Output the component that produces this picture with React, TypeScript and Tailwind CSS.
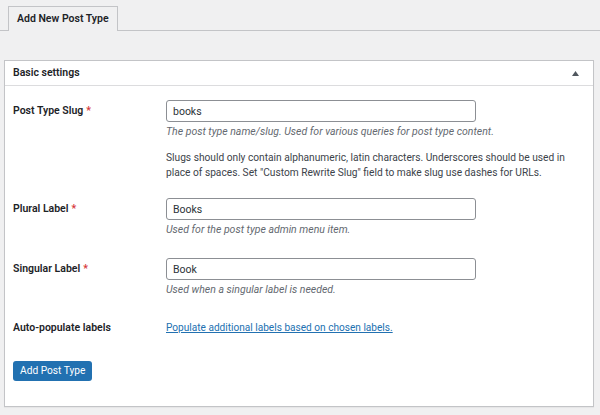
const font = "font-['Roboto','Noto_Sans',sans-serif]";

function Req() {
  return <span className="ml-[3px] text-[#d63638]">*</span>;
}

function Field({
  label,
  value,
  help,
  className = "",
  children,
}: {
  label: string;
  value: string;
  help: string;
  className?: string;
  children?: React.ReactNode;
}) {
  return (
    <div className={`flex ${className}`}>
      <div className="w-[153px] shrink-0 text-[10.5px] font-semibold leading-[22px] text-[#1d2327]">
        {label}
        <Req />
      </div>
      <div className="flex-1">
        <input
          readOnly
          value={value}
          className="box-border block h-[22px] w-[310px] rounded-[3px] border border-[#8c8f94] bg-white px-[6px] text-[10.5px] text-[#2c3338] outline-none"
        />
        <p className="mt-[2px] text-[10.5px] italic leading-[15px] text-[#646970]">{help}</p>
        {children}
      </div>
    </div>
  );
}

export default function App() {
  return (
    <div className={`min-h-[415px] w-[600px] bg-[#f0f0f1] ${font}`}>
      {/* tab strip */}
      <div className="flex border-b border-[#c3c4c7] pl-[8px] pt-[6px]">
        <div className="-mb-px border border-b-0 border-[#c3c4c7] bg-[#f0f0f1] px-[8px] text-[10.5px] font-semibold leading-[24px] text-[#1d2327]">
          Add New Post Type
        </div>
      </div>

      {/* settings panel */}
      <div className="ml-[4px] mr-[6px] mt-[29px] border border-[#c3c4c7] bg-white shadow-[0_1px_1px_rgba(0,0,0,0.04)]">
        <div className="flex h-[25px] items-center justify-between border-b border-[#dcdcde] pl-[8px] pr-[14px]">
          <span className="text-[10.5px] font-semibold text-[#1d2327]">Basic settings</span>
          <svg width="7" height="5" viewBox="0 0 7 5">
            <path d="M3.5 0L7 5H0z" fill="#50575e" />
          </svg>
        </div>

        <div className="px-[8px] pb-[25px] pt-[14px]">
          <Field label="Post Type Slug" value="books" help="The post type name/slug. Used for various queries for post type content.">
            <p className="mt-[11px] whitespace-nowrap text-[10.2px] leading-[15px] text-[#3c434a]">
              Slugs should only contain alphanumeric, latin characters. Underscores should be used in
              <br />
              place of spaces. Set "Custom Rewrite Slug" field to make slug use dashes for URLs.
            </p>
          </Field>

          <Field className="mt-[18px]" label="Plural Label" value="Books" help="Used for the post type admin menu item." />

          <Field className="mt-[21px]" label="Singular Label" value="Book" help="Used when a singular label is needed." />

          <div className="mt-[20px] flex">
            <div className="w-[153px] shrink-0 text-[10.5px] font-semibold leading-[22px] text-[#1d2327]">
              Auto-populate labels
            </div>
            <a href="#" className="text-[10.1px] leading-[22px] text-[#2271b1] underline">
              Populate additional labels based on chosen labels.
            </a>
          </div>

          <button
            type="button"
            className="mt-[22px] h-[20px] rounded-[3px] bg-[#2271b1] px-[7px] text-[10.2px] text-white"
          >
            Add Post Type
          </button>
        </div>
      </div>
    </div>
  );
}
